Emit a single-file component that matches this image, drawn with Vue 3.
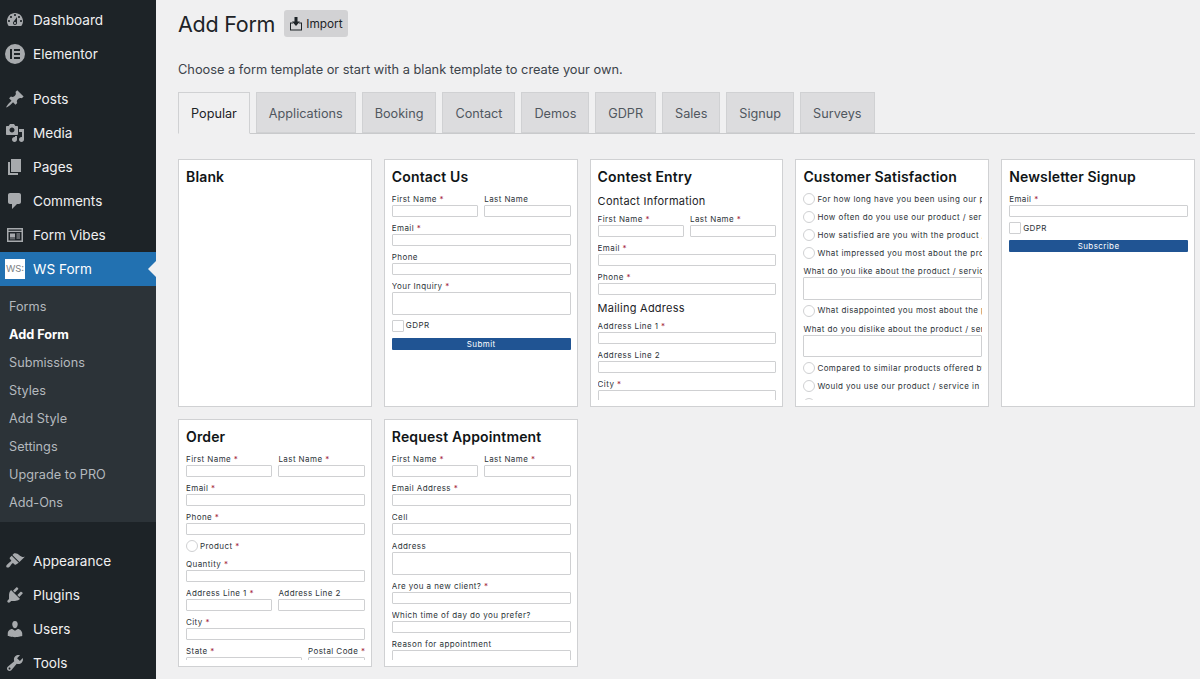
<template>
  <div class="wp">
    <aside class="side">
      <ul class="menu menu--first">
        <li v-for="m in menuTop" :key="m.label" class="menu__item">
          <svg class="menu__icon" viewBox="0 0 20 20"><path :d="m.icon" /></svg>
          <span>{{ m.label }}</span>
        </li>
      </ul>
      <ul class="menu menu--gap">
        <li v-for="m in menuMain" :key="m.label" class="menu__item">
          <svg class="menu__icon" viewBox="0 0 20 20"><path :d="m.icon" /></svg>
          <span>{{ m.label }}</span>
        </li>
        <li class="menu__item menu__item--active">
          <span class="ws-logo">WS:</span>
          <span>WS Form</span>
        </li>
      </ul>
      <ul class="submenu">
        <li v-for="s in submenu" :key="s" :class="{ 'submenu__on': s === 'Add Form' }">{{ s }}</li>
      </ul>
      <ul class="menu menu--last">
        <li v-for="m in menuBottom" :key="m.label" class="menu__item">
          <svg class="menu__icon" viewBox="0 0 20 20"><path :d="m.icon" /></svg>
          <span>{{ m.label }}</span>
        </li>
      </ul>
    </aside>

    <main class="main">
      <div class="head">
        <h1 class="head__title">Add Form</h1>
        <button class="import" type="button">
          <svg class="import__icon" viewBox="0 0 14 14">
            <path d="M1 5.500v8h12v-8h-3v1h2v6H2v-6h2v-1z" />
            <path d="M5.500 0h3v4.500H11L7 9 3 4.500h2.500z" />
          </svg>
          Import
        </button>
      </div>
      <p class="intro">Choose a form template or start with a blank template to create your own.</p>

      <nav class="tabs">
        <a v-for="(t, i) in tabs" :key="t" class="tab" :class="{ 'tab--on': i === 0 }">{{ t }}</a>
      </nav>

      <section class="grid">
        <article v-for="c in cards" :key="c.title" class="card">
          <div class="card__clip">
            <h3 class="card__title">{{ c.title }}</h3>
            <template v-for="(f, i) in c.items" :key="i">
              <h4 v-if="f.t === 'h'" class="sub">{{ f.l }}</h4>
              <div v-else-if="f.t === 'row'" class="row" :class="{ 'row--wide': f.wide }">
                <div v-for="col in f.cols" :key="col.l" class="field">
                  <label class="lbl">{{ col.l }}<i v-if="col.r"> *</i></label>
                  <div class="input"></div>
                </div>
              </div>
              <div v-else-if="f.t === 'check'" class="opt">
                <span class="box"></span><span class="lbl">{{ f.l }}</span>
              </div>
              <div v-else-if="f.t === 'radio'" class="opt opt--radio">
                <span class="box box--round"></span><span class="lbl">{{ f.l }}<i v-if="f.r"> *</i></span>
              </div>
              <button v-else-if="f.t === 'btn'" class="submit" type="button">{{ f.l }}</button>
              <div v-else class="field">
                <label class="lbl">{{ f.l }}<i v-if="f.r"> *</i></label>
                <div class="input" :class="{ 'input--area': f.t === 'area' }"></div>
              </div>
            </template>
          </div>
        </article>
      </section>
    </main>
  </div>
</template>

<script setup>
const icons = {
  dashboard: 'M3.76 16h12.48c1.1-1.37 1.76-3.11 1.76-5 0-4.42-3.58-8-8-8s-8 3.58-8 8c0 1.89.66 3.63 1.76 5zM10 4c.55 0 1 .45 1 1s-.45 1-1 1-1-.45-1-1 .45-1 1-1zM6 6c.55 0 1 .45 1 1s-.45 1-1 1-1-.45-1-1 .45-1 1-1zm8 0c.55 0 1 .45 1 1s-.45 1-1 1-1-.45-1-1 .45-1 1-1zm-5.370 5.550L12 7v6c0 1.100-.9 2-2 2s-2-.9-2-2c0-.57.24-1.080.63-1.450zM4 10c.55 0 1 .45 1 1s-.45 1-1 1-1-.45-1-1 .45-1 1-1zm12 0c.55 0 1 .45 1 1s-.45 1-1 1-1-.45-1-1 .45-1 1-1zm-5 3c0-.55-.45-1-1-1s-1 .45-1 1 .45 1 1 1 1-.45 1-1z',
  elementor: 'M10 0a10 10 0 1 0 0 20 10 10 0 0 0 0-20zM7 15H5V5h2zm8 0H9v-2h6zm0-4H9V9h6zm0-4H9V5h6z',
  posts: 'M10.440 3.020l1.820-1.820 6.360 6.350-1.830 1.820c-1.050-.68-2.480-.57-3.410.36l-.75.75c-.92.93-1.040 2.350-.35 3.410l-1.830 1.820-2.410-2.410-2.800 2.790c-.42.42-3.380 2.710-3.800 2.290s1.860-3.390 2.280-3.810l2.790-2.790L4.100 9.360l1.830-1.820c1.050.69 2.480.57 3.400-.36l.75-.75c.93-.92 1.050-2.350.36-3.410z',
  media: 'M13 11V4c0-.55-.45-1-1-1h-1.670L9 1H5L3.670 3H2c-.55 0-1 .45-1 1v7c0 .55.45 1 1 1h10c.55 0 1-.45 1-1zM7 4.500c1.380 0 2.500 1.120 2.500 2.500S8.380 9.500 7 9.500 4.500 8.380 4.500 7 5.620 4.500 7 4.500zM14 6h5v10.500c0 1.380-1.120 2.500-2.500 2.500S14 17.880 14 16.500s1.120-2.500 2.500-2.500c.17 0 .34.02.5.05V9h-3V6zm-4 8.050V13h2v3.500c0 1.380-1.120 2.500-2.500 2.500S7 17.880 7 16.500 8.120 14 9.500 14c.17 0 .34.02.5.05z',
  pages: 'M6 15V2h10v13H6zm-1 1h8v2H3V5h2v11z',
  comments: 'M5 2h9c1.100 0 2 .9 2 2v7c0 1.100-.9 2-2 2h-2l-5 5v-5H5c-1.100 0-2-.9-2-2V4c0-1.100.9-2 2-2z',
  vibes: 'M2 3h16v14H2zm1.500 1.500v1.200h13V4.500zm0 2.500v8.500h13V7zM5 8.500h5v4H5zm6.500 0H15v1h-3.500zm0 2H15v1h-3.500zm0 2H15v1h-3.500zM5 13.500h5v.8H5z',
  appearance: 'M14.480 11.060L7.410 3.990l1.500-1.500c.5-.56 2.300-.47 3.510.32 1.210.8 1.430 1.280 2.910 2.100 1.180.64 2.450 1.260 4.450.85zm-.71.71L6.700 4.700 4.930 6.470c-.39.39-.39 1.020 0 1.410l1.060 1.060c.39.39.39 1.030 0 1.420-.6.6-1.430 1.110-2.210 1.690-.35.26-.7.53-1.010.84C1.430 13.710.96 15.120 1.400 15.900c.55.97 2.010.97 3.180-.21.31-.31.58-.66.84-1.010.58-.78 1.090-1.610 1.690-2.210.39-.39 1.020-.39 1.410 0l1.060 1.060c.39.39 1.020.39 1.410 0z',
  plugins: 'M13.110 4.360L9.870 7.600 8 5.730l3.240-3.240c.35-.34 1.050-.2 1.560.32.52.51.66 1.210.31 1.550zm-8 1.770l.91-1.120 9.010 9.010-1.190.84c-.71.71-2.630 1.160-3.820 1.160H6.140L4.900 17.260c-.59.59-1.540.59-2.120 0-.59-.58-.59-1.530 0-2.120l1.240-1.240v-3.880c0-1.130.4-3.190 1.090-3.890zm7.260 3.970l3.240-3.240c.34-.35 1.040-.21 1.550.31.52.51.66 1.210.31 1.550l-3.240 3.250z',
  users: 'M10 9.250c-2.270 0-2.730-3.440-2.730-3.440C7 4.020 7.820 2 9.970 2c2.160 0 2.980 2.020 2.710 3.810 0 0-.41 3.440-2.680 3.440zm0 2.570L12.720 10c2.390 0 4.520 2.330 4.520 4.530v2.490s-3.650 1.130-7.240 1.130c-3.650 0-7.240-1.130-7.240-1.130v-2.490c0-2.250 1.940-4.480 4.470-4.480z',
  tools: 'M16.680 9.770c-1.340 1.340-3.300 1.670-4.950.99l-5.410 6.520c-.99.99-2.590.99-3.580 0s-.99-2.590 0-3.570l6.520-5.420c-.68-1.650-.35-3.610.99-4.950 1.280-1.280 3.120-1.620 4.720-1.060l-2.890 2.890 2.820 2.820 2.860-2.870c.53 1.580.18 3.390-1.080 4.650zM3.810 16.210c.4.39 1.040.39 1.430 0 .4-.4.4-1.040 0-1.430-.39-.4-1.030-.4-1.430 0-.39.39-.39 1.030 0 1.430z'
}

const menuTop = [
  { label: 'Dashboard', icon: icons.dashboard },
  { label: 'Elementor', icon: icons.elementor }
]
const menuMain = [
  { label: 'Posts', icon: icons.posts },
  { label: 'Media', icon: icons.media },
  { label: 'Pages', icon: icons.pages },
  { label: 'Comments', icon: icons.comments },
  { label: 'Form Vibes', icon: icons.vibes }
]
const menuBottom = [
  { label: 'Appearance', icon: icons.appearance },
  { label: 'Plugins', icon: icons.plugins },
  { label: 'Users', icon: icons.users },
  { label: 'Tools', icon: icons.tools }
]
const submenu = ['Forms', 'Add Form', 'Submissions', 'Styles', 'Add Style', 'Settings', 'Upgrade to PRO', 'Add-Ons']
const tabs = ['Popular', 'Applications', 'Booking', 'Contact', 'Demos', 'GDPR', 'Sales', 'Signup', 'Surveys']

// small helpers so the card data stays readable
const field = (l, r) => ({ t: 'field', l, r })
const area = (l, r) => ({ t: 'area', l, r })
const row = (a, ar, b, br, wide) => ({ t: 'row', wide, cols: [{ l: a, r: ar }, { l: b, r: br }] })
const radio = (l, r) => ({ t: 'radio', l, r })

const cards = [
  { title: 'Blank', items: [] },
  {
    title: 'Contact Us',
    items: [
      row('First Name', true, 'Last Name', false),
      field('Email', true),
      field('Phone'),
      area('Your Inquiry', true),
      { t: 'check', l: 'GDPR' },
      { t: 'btn', l: 'Submit' }
    ]
  },
  {
    title: 'Contest Entry',
    items: [
      { t: 'h', l: 'Contact Information' },
      row('First Name', true, 'Last Name', true),
      field('Email', true),
      field('Phone', true),
      { t: 'h', l: 'Mailing Address' },
      field('Address Line 1', true),
      field('Address Line 2'),
      field('City', true)
    ]
  },
  {
    title: 'Customer Satisfaction',
    items: [
      radio('For how long have you been using our product / service?'),
      radio('How often do you use our product / service?'),
      radio('How satisfied are you with the product / service?'),
      radio('What impressed you most about the product / service?'),
      area('What do you like about the product / service?'),
      radio('What disappointed you most about the product / service?'),
      area('What do you dislike about the product / service?'),
      radio('Compared to similar products offered by others?'),
      radio('Would you use our product / service in the future?'),
      radio('Would you recommend our product?')
    ]
  },
  {
    title: 'Newsletter Signup',
    items: [
      field('Email', true),
      { t: 'check', l: 'GDPR' },
      { t: 'btn', l: 'Subscribe' }
    ]
  },
  {
    title: 'Order',
    items: [
      row('First Name', true, 'Last Name', true),
      field('Email', true),
      field('Phone', true),
      radio('Product', true),
      field('Quantity', true),
      row('Address Line 1', true, 'Address Line 2', false),
      field('City', true),
      row('State', true, 'Postal Code', true, true)
    ]
  },
  {
    title: 'Request Appointment',
    items: [
      row('First Name', true, 'Last Name', true),
      field('Email Address', true),
      field('Cell'),
      area('Address'),
      field('Are you a new client?', true),
      field('Which time of day do you prefer?'),
      area('Reason for appointment')
    ]
  }
]
</script>

<style>
html,
body {
  margin: 0;
  height: 100%;
  overflow: hidden;
  background: #f0f0f1;
}
</style>

<style scoped>
.wp {
  display: flex;
  height: 679px;
  overflow: hidden;
  font-family: Inter, "Liberation Sans", sans-serif;
  color: #1d2327;
}

/* sidebar */
.side {
  flex: 0 0 156px;
  background: #1d2327;
  color: #f0f0f1;
  font-size: 13.6px;
  overflow: hidden;
}
.side ul {
  list-style: none;
  margin: 0;
  padding: 0;
}
.menu--first {
  padding-top: 3px !important;
}
.menu--gap {
  margin-top: 11px !important;
}
.menu--last {
  margin-top: 22px !important;
}
.menu__item {
  position: relative;
  display: flex;
  align-items: center;
  height: 34px;
  padding-left: 5px;
  gap: 8px;
}
.menu__icon {
  flex: none;
  width: 20px;
  height: 20px;
  fill: #a7aaad;
}
.menu__item--active {
  background: #2271b1;
  color: #fff;
}
.menu__item--active::after {
  content: "";
  position: absolute;
  right: 0;
  top: 9px;
  border: 8px solid transparent;
  border-left: 0;
  border-right-color: #f0f0f1;
}
.ws-logo {
  flex: none;
  width: 20px;
  height: 20px;
  background: #fff;
  color: #7a7e82;
  font-size: 9.5px;
  line-height: 20px;
  text-align: center;
  overflow: hidden;
}
.submenu {
  background: #2c3338;
  padding: 7px 0 5px !important;
  font-size: 12.7px;
  color: #b4b9be;
}
.submenu li {
  height: 28px;
  line-height: 28px;
  padding-left: 9px;
}
.submenu .submenu__on {
  color: #fff;
  font-weight: 700;
}

/* main area */
.main {
  flex: 1;
  min-width: 0;
  padding: 10px 5px 0 22px;
}
.head {
  display: flex;
  align-items: center;
  gap: 9px;
  height: 27px;
}
.head__title {
  margin: 0;
  font-size: 21.5px;
  letter-spacing: -0.25px;
  font-weight: 400;
}
.import {
  display: flex;
  align-items: center;
  gap: 3px;
  height: 27px;
  width: 64px;
  padding: 0 0 0 5px;
  border: 0;
  border-radius: 3px;
  background: #d2d2d4;
  color: #1d2327;
  font: 11.8px Inter, "Liberation Sans", sans-serif;
}
.import__icon {
  width: 14px;
  height: 14px;
  fill: #1d2327;
}
.intro {
  margin: 25px 0 0;
  font-size: 12.8px;
  line-height: 16px;
  color: #3c434a;
}
.tabs {
  display: flex;
  margin-top: 14px;
  height: 41px;
  gap: 5.9px;
  border-bottom: 1px solid #c9cacc;
}
.tab {
  flex: none;
  height: 41px;
  padding: 0 12px;
  box-sizing: border-box;
  line-height: 41px;
  font-size: 12.7px;
  color: #50575e;
  background: #dcdcde;
  border: 1px solid #d0d1d3;
}
.tab--on {
  height: 42px;
  background: #f0f0f1;
  border-bottom-color: #f0f0f1;
  color: #1d2327;
}

/* template cards */
.grid {
  display: grid;
  grid-template-columns: repeat(5, 1fr);
  grid-auto-rows: 248px;
  gap: 12px;
  margin-top: 25px;
}
.card {
  box-sizing: border-box;
  padding: 7px 6px 6px 7px;
  background: #fff;
  border: 1px solid #d0d1d3;
  min-width: 0;
}
.card__clip {
  height: 100%;
  overflow: hidden;
}
.card__title {
  margin: 0 0 8px;
  font-size: 14px;
  line-height: 19px;
  letter-spacing: 0.15px;
  font-weight: 600;
  color: #101517;
}
.sub {
  margin: 0 0 6px;
  font-size: 11px;
  line-height: 14px;
  letter-spacing: 0.25px;
  font-weight: 400;
  color: #1d2327;
}
.field {
  margin-bottom: 6px;
  min-width: 0;
}
.row {
  display: grid;
  grid-template-columns: 1fr 1fr;
  gap: 6px;
}
.row--wide {
  grid-template-columns: 116px 1fr;
}
.lbl {
  display: block;
  font-size: 8px;
  line-height: 11px;
  letter-spacing: 0.42px;
  white-space: nowrap;
  color: #2c3338;
}
.lbl i {
  font-style: normal;
  color: #a3253a;
}
.input {
  box-sizing: border-box;
  height: 12px;
  border: 1px solid #cfd0d2;
  border-radius: 1px;
}
.input--area {
  height: 22.5px;
}
.opt {
  display: flex;
  align-items: center;
  gap: 2px;
  height: 12px;
  margin: -1px 0 6px;
}
.opt--radio {
  margin-bottom: 7px;
}
.box {
  flex: none;
  box-sizing: border-box;
  width: 12px;
  height: 12px;
  border: 1px solid #cfd0d2;
  border-radius: 1px;
}
.box--round {
  border-radius: 50%;
}
.submit {
  display: block;
  width: 100%;
  height: 12px;
  padding: 0;
  border: 0;
  border-radius: 1px;
  background: #205493;
  color: #fff;
  font: 8px/12px Inter, "Liberation Sans", sans-serif;
  letter-spacing: 0.4px;
}
</style>
